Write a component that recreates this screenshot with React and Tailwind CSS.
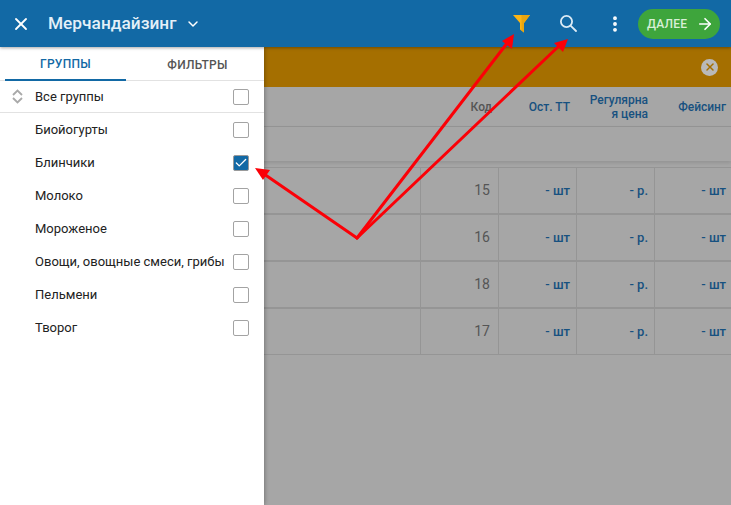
import React from 'react';
import { X, ChevronDown, EllipsisVertical, ArrowRight, Check } from 'lucide-react';

const groups = ['Биойогурты', 'Блинчики', 'Молоко', 'Мороженое', 'Овощи, овощные смеси, грибы', 'Пельмени', 'Творог'];
const rows = ['15', '16', '18', '17'];

function Box({ checked }) {
  return checked ? (
    <div className="w-[16px] h-[16px] rounded-[2px] bg-[#1269a5] border border-[#9a9a9a] flex items-center justify-center">
      <Check size={14} strokeWidth={2.2} className="text-white" />
    </div>
  ) : (
    <div className="w-[16px] h-[16px] rounded-[2px] bg-white border-[1.5px] border-[#a3a3a3]" />
  );
}

function Arrows() {
  return (
    <svg className="absolute inset-0 z-30 pointer-events-none" width="731" height="505" viewBox="0 0 731 505">
      <g stroke="#fb0007" strokeWidth="3" fill="none" strokeLinecap="round">
        <path d="M357 238 L508 42" />
        <path d="M357 238 L560 45" />
        <path d="M357 238 L264 174" />
      </g>
      <g fill="#fb0007">
        <path d="M514 34 L512 49 L502 41 Z" />
        <path d="M568 39 L563 52 L554 43 Z" />
        <path d="M255 168 L270 170 L263 180 Z" />
      </g>
    </svg>
  );
}

export default function App() {
  return (
    <div className="relative w-[731px] h-[505px] overflow-hidden bg-[#a6a6a6] font-['Roboto',sans-serif]">
      <header className="relative z-20 h-[47px] bg-[#1269a5] flex items-center text-white shadow-[0_1px_3px_rgba(0,0,0,0.35)]">
        <X size={20} strokeWidth={2.2} className="ml-[11px]" />
        <span className="ml-[17px] text-[17.3px] font-medium text-[#e4f0f8]">Мерчандайзинг</span>
        <ChevronDown size={16} strokeWidth={2.2} className="ml-[9px] mt-px" />
        <svg className="ml-auto -mt-[1px]" width="17" height="19" viewBox="0 0 17 19">
          <path d="M0 1 H17 L11 9 V18.5 L7 15.5 V9 Z" fill="#fdb515" />
          <path d="M8.5 1 H17 L11 9 V18.5 L8.5 16.5 Z" fill="#e9a50f" />
        </svg>
        <svg className="ml-[30px] -mt-[1px]" width="17" height="17" viewBox="0 0 17 17" fill="none" stroke="#dcebf5" strokeWidth="1.8" strokeLinecap="round">
          <circle cx="6.5" cy="6.5" r="5.6" />
          <path d="M10.8 10.8 L16 16" />
        </svg>
        <EllipsisVertical size={20} strokeWidth={2.6} className="ml-[28px]" />
        <button className="ml-[13px] mr-[11px] w-[82px] h-[30px] rounded-full bg-[#3ea53c] flex items-center pl-[9px] gap-[9px]">
          <span className="text-[12px] font-medium text-[#d8efd6] tracking-[0.2px]">ДАЛЕЕ</span>
          <ArrowRight size={18} strokeWidth={2.2} />
        </button>
      </header>

      <div className="h-[40px] bg-[#a56f00] flex items-center justify-end pr-[13px]">
        <div className="w-[17px] h-[17px] rounded-full bg-[#b9b9b9] flex items-center justify-center">
          <X size={12} strokeWidth={3} className="text-[#a56f00]" />
        </div>
      </div>

      <div className="grid grid-cols-[1fr_78px_78px_78px_77px] h-[40px] border-b border-[#959595] text-[12px] font-medium items-center text-right text-[#175180]">
        <div />
        <div className="pr-[6px] text-[#555555]">Код</div>
        <div className="pr-[6px]">Ост. ТТ</div>
        <div className="pr-[6px] leading-[14px]">Регулярна<br />я цена</div>
        <div className="pr-[5px]">Фейсинг</div>
      </div>
      <div className="h-[34px] shadow-[0_2px_4px_rgba(0,0,0,0.12)]" />
      <div className="h-[6px]" />
      <div className="border-t border-[#959595]">
        {rows.map((code, i) => (
          <div key={code} className={`grid grid-cols-[1fr_78px_78px_78px_77px] items-stretch text-right ${i < 3 ? 'border-b-2 border-[#959595] h-[47px]' : 'border-b border-[#959595] h-[46px]'}`}>
            <div />
            <div className="border-l border-[#959595] pr-[8px] flex items-center justify-end text-[14px] text-[#555555]">{code}</div>
            <div className="border-l border-[#959595] pr-[6px] flex items-center justify-end text-[13px] font-medium text-[#175180]">- шт</div>
            <div className="border-l border-[#959595] pr-[6px] flex items-center justify-end text-[13px] font-medium text-[#175180]">- р.</div>
            <div className="border-l border-[#959595] pr-[5px] flex items-center justify-end text-[13px] font-medium text-[#175180]">- шт</div>
          </div>
        ))}
      </div>

      {/* drawer with group list */}
      <aside className="absolute left-0 top-[47px] bottom-0 z-10 w-[264px] bg-white shadow-[0_0_5px_rgba(0,0,0,0.4)] pt-px">
        <div className="flex h-[33px] pl-[5px] border-b border-[#e2e2e2] text-[12px] tracking-[0.3px]">
          <div className="w-[121px] shrink-0 flex items-center justify-center border-b-[2px] border-[#1269a5] text-[#1269a5] h-[33px] pt-px font-medium">ГРУППЫ</div>
          <div className="flex-1 flex items-center justify-center text-[#555555] pt-px pl-[5px] font-medium">ФИЛЬТРЫ</div>
        </div>
        <div className="flex items-center h-[32px] border-b border-[#e2e2e2] pl-[12px] pr-[15px] text-[13px] text-[#222222]">
          <svg width="11" height="15" viewBox="0 0 11 15" fill="none" stroke="#a9a9a9" strokeWidth="1.8">
            <path d="M1 6 L5.5 1.5 L10 6" />
            <path d="M1 9 L5.5 13.5 L10 9" />
          </svg>
          <span className="ml-[12px] flex-1">Все группы</span>
          <Box />
        </div>
        {groups.map((g) => (
          <div key={g} className="flex items-center h-[33px] pl-[35px] pr-[15px] text-[13px] text-[#222222]">
            <span className="flex-1">{g}</span>
            <Box checked={g === 'Блинчики'} />
          </div>
        ))}
      </aside>

      <Arrows />
    </div>
  );
}
